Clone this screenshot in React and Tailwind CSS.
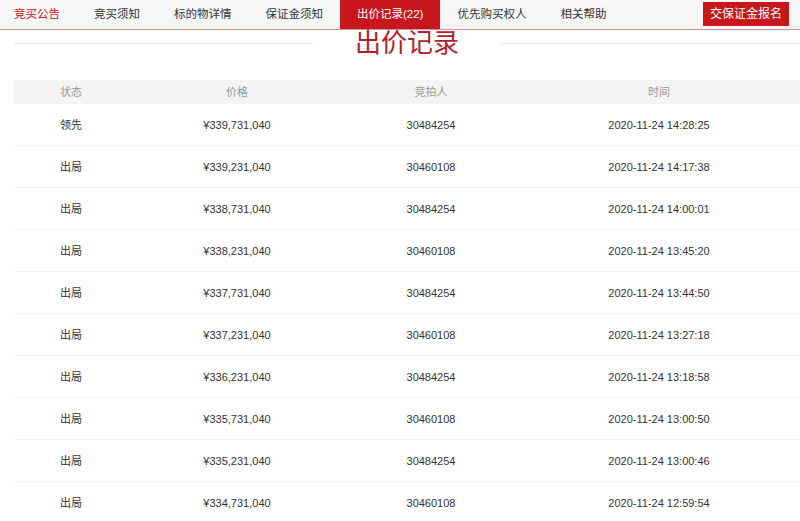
import React from 'react';

const tabs = [
  { label: '竞买公告', first: true },
  { label: '竞买须知' },
  { label: '标的物详情' },
  { label: '保证金须知' },
  { label: '出价记录(22)', active: true },
  { label: '优先购买权人' },
  { label: '相关帮助' }
];

const bids = [
  ['领先', '¥339,731,040', '30484254', '2020-11-24 14:28:25'],
  ['出局', '¥339,231,040', '30460108', '2020-11-24 14:17:38'],
  ['出局', '¥338,731,040', '30484254', '2020-11-24 14:00:01'],
  ['出局', '¥338,231,040', '30460108', '2020-11-24 13:45:20'],
  ['出局', '¥337,731,040', '30484254', '2020-11-24 13:44:50'],
  ['出局', '¥337,231,040', '30460108', '2020-11-24 13:27:18'],
  ['出局', '¥336,231,040', '30484254', '2020-11-24 13:18:58'],
  ['出局', '¥335,731,040', '30460108', '2020-11-24 13:00:50'],
  ['出局', '¥335,231,040', '30484254', '2020-11-24 13:00:46'],
  ['出局', '¥334,731,040', '30460108', '2020-11-24 12:59:54']
];

const cols = 'grid grid-cols-[114px_218px_170px_286px] w-[788px]';

const App = () => {
  return (
    <div className="h-screen overflow-hidden bg-white font-['Liberation_Sans','Noto_Sans_CJK_SC',sans-serif]">
      {/* Tabs */}
      <div className="flex h-[30px] items-stretch border-b border-[#d59597] bg-[#f6f6f6] pl-[14px]">
        {tabs.map((t) => (
          <div
            key={t.label}
            className={`flex items-center text-[11.5px] ${t.first ? 'pr-[17px]' : 'px-[17px]'} ${
              t.active ? 'bg-[#c8161d] text-white' : t.first ? 'text-[#c8161d]' : 'text-[#333]'
            }`}
          >
            {t.label}
          </div>
        ))}
        <div className="ml-auto mr-[11px] flex items-start pt-[2px]">
          <button className="h-[24px] w-[86px] bg-[#c8161d] text-[12px] text-white">交保证金报名</button>
        </div>
      </div>

      {/* Title */}
      <div className="ml-[14px] flex h-[27px] items-center">
        <div className="h-px flex-1 bg-[#e6e6e6]" />
        <h1 className="px-[42px] text-[26px] leading-[27px] text-[#b0222b]">出价记录</h1>
        <div className="h-px flex-1 bg-[#e6e6e6]" />
      </div>

      {/* Table */}
      <div className="mt-[23px] ml-[14px] text-[11px]">
        <div className={`${cols} h-[24px] items-center bg-[#f4f4f4] text-center text-[#999]`}>
          <div>状态</div>
          <div>价格</div>
          <div>竞拍人</div>
          <div>时间</div>
        </div>
        {bids.map((b, i) => (
          <div key={i} className={`${cols} h-[42px] items-center border-b border-[#f1f1f1] pt-px text-center text-[#333]`}>
            {b.map((c, j) => (
              <div key={j}>{c}</div>
            ))}
          </div>
        ))}
      </div>
    </div>
  );
};

export default App;
